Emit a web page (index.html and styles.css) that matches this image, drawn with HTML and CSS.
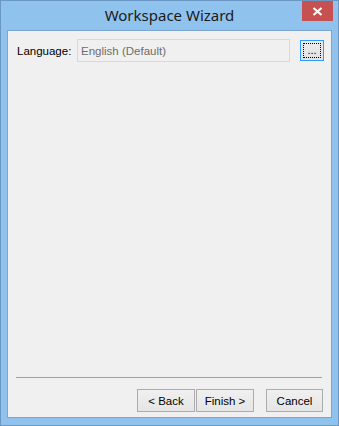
FILE: index.html
```html
<!DOCTYPE html>
<html lang="en">
<head>
    <meta charset="UTF-8">
    <title>Workspace Wizard</title>
    <link rel="stylesheet" href="styles.css">
</head>
<body>
    <div class="window">
        <div class="titlebar">
            <span class="title">Workspace Wizard</span>
            <div class="close-btn">
                <svg width="11" height="9" viewBox="0 0 11 9">
                    <path d="M1.5 1 L9.5 8 M9.5 1 L1.5 8" stroke="#fff" stroke-width="2.2"/>
                </svg>
            </div>
        </div>

        <div class="client">
            <div class="lang-row">
                <label class="lang-label" for="language">Language:</label>
                <input class="lang-field" id="language" type="text" value="English (Default)" disabled>
                <button class="browse-btn"><span class="focus-rect">...</span></button>
            </div>

            <div class="spacer"></div>

            <hr class="separator">

            <div class="buttons">
                <button class="btn">&lt; Back</button>
                <button class="btn">Finish &gt;</button>
                <button class="btn cancel">Cancel</button>
            </div>
        </div>
    </div>
</body>
</html>
```

FILE: styles.css
```css
html, body {
    margin: 0;
    padding: 0;
}
body {
    width: 339px;
    height: 426px;
    font-family: "Liberation Sans", Arial, sans-serif;
    font-size: 11px;
}
.window {
    box-sizing: border-box;
    width: 339px;
    height: 426px;
    background: #90c2ee;
    border: 1px solid #6b97c4;
    display: flex;
    flex-direction: column;
}
.titlebar {
    height: 29px;
    flex: none;
    position: relative;
    display: flex;
    align-items: center;
    justify-content: center;
}
.title {
    font-family: "Noto Sans", "Open Sans", sans-serif;
    font-size: 15px;
    color: #1b1b1b;
    margin-top: -1px;
}
.close-btn {
    position: absolute;
    top: 0;
    right: 5px;
    width: 31px;
    height: 20px;
    background: #c75050;
    display: flex;
    align-items: center;
    justify-content: center;
}
.client {
    flex: 1;
    margin: 0 6px 7px 6px;
    border: 1px solid #7ba4cf;
    background: #f0f0f0;
    display: flex;
    flex-direction: column;
}
.lang-row {
    display: flex;
    align-items: center;
    margin-top: 8px;
    padding: 0 7px 0 9px;
}
.lang-label {
    width: 60px;
    color: #000;
    font-size: 11.5px;
}
.lang-field {
    box-sizing: border-box;
    width: 213px;
    height: 23px;
    margin: 0;
    padding: 0 3px;
    border: 1px solid #d9d9d9;
    background: #f0f0f0;
    color: #6d6d6d;
    font-family: inherit;
    font-size: 11.5px;
}
.browse-btn {
    box-sizing: border-box;
    width: 24px;
    height: 21px;
    margin-left: auto;
    padding: 2px;
    border: 1px solid #3399ff;
    background: linear-gradient(#ececec, #e2e2e2);
    font-family: inherit;
    font-size: 11px;
    display: flex;
}
.focus-rect {
    flex: 1;
    border: 1px dotted #000;
    line-height: 12px;
    text-align: center;
}
.spacer {
    flex: 1;
}
.separator {
    margin: 0 9px 0 8px;
    border: none;
    border-top: 1px solid #a0a0a0;
    height: 0;
}
.buttons {
    display: flex;
    gap: 1px;
    padding: 11px 8px 5px 0;
    justify-content: flex-end;
}
.btn {
    box-sizing: border-box;
    width: 58px;
    height: 23px;
    margin: 0;
    border: 1px solid #acacac;
    background: linear-gradient(#f0f0f0, #e5e5e5);
    color: #000;
    font-family: inherit;
    font-size: 11.5px;
    padding: 0;
}
.btn.cancel {
    width: 57px;
    margin-left: 11px;
}
```
